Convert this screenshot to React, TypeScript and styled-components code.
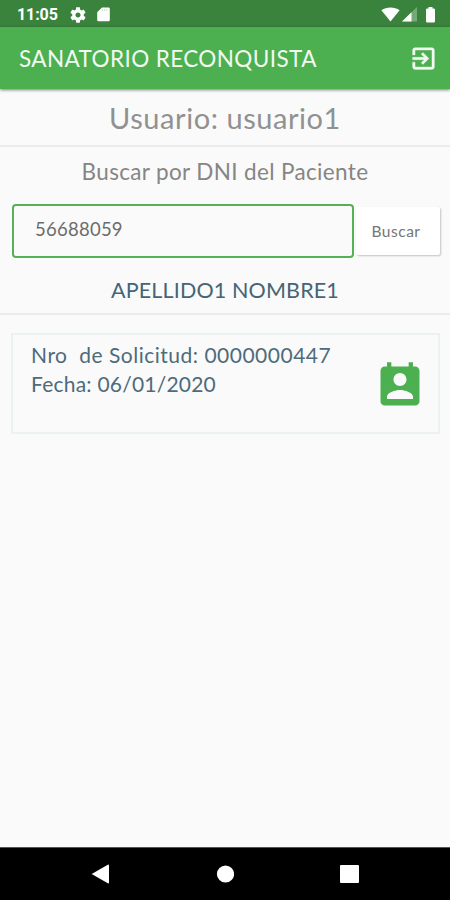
import React from 'react';
import styled, { createGlobalStyle } from 'styled-components';

const GlobalStyle = createGlobalStyle`
  * { box-sizing: border-box; }
  body { margin: 0; background: #fafafa; }
`;

const Screen = styled.div`
  width: 450px;
  height: 900px;
  display: flex;
  flex-direction: column;
  overflow: hidden;
  background: #fafafa;
  font-family: Lato, 'Open Sans', sans-serif;
`;

const StatusBar = styled.header`
  height: 27px;
  flex: none;
  display: flex;
  align-items: center;
  justify-content: space-between;
  padding: 2px 14px 0 17px;
  background: #3a833d;
  color: #fff;
`;

const StatusGroup = styled.div<{ $gap: number }>`
  display: flex;
  align-items: center;
  gap: ${(p) => p.$gap}px;
`;

const Clock = styled.span`
  font: 700 16px/20px Roboto, sans-serif;
  letter-spacing: -0.1px;
`;

const AppBar = styled.div`
  height: 62px;
  flex: none;
  display: flex;
  align-items: center;
  justify-content: space-between;
  padding: 0 12px 0 19px;
  background: #4caf50;
  color: #f1faf1;
  box-shadow: 0 1px 3px rgba(0, 0, 0, 0.5);
  position: relative;
`;

const Label = styled.span<{ $size: number; $spacing: number }>`
  font-size: ${(p) => p.$size}px;
  letter-spacing: ${(p) => p.$spacing}px;
  line-height: 29px;
  white-space: pre;
`;

const Heading = styled.div<{ $height: number; $color: string; $ruled?: boolean; $pad?: string }>`
  height: ${(p) => p.$height}px;
  flex: none;
  display: flex;
  align-items: center;
  justify-content: center;
  padding: ${(p) => p.$pad ?? '0'};
  color: ${(p) => p.$color};
  border-bottom: ${(p) => (p.$ruled ? '2px solid #ebebeb' : 'none')};
`;

const SearchRow = styled.form`
  display: flex;
  flex: none;
  height: 54px;
  margin: 0 10px 0 12px;
  gap: 2px;
`;

const DniInput = styled.input`
  width: 342px;
  height: 54px;
  padding: 0 21px 4px;
  border: 2px solid #55b059;
  border-radius: 4px;
  outline: none;
  background: #fafafa;
  color: #6c6c6c;
  font: 400 18.5px Lato, sans-serif;
  letter-spacing: 0.25px;
`;

const SearchButton = styled.button`
  width: 84px;
  height: 48px;
  margin-top: 3px;
  padding: 0 4px 0 0;
  border: 0;
  border-radius: 2px;
  background: #fff;
  color: #757575;
  font-family: inherit;
  box-shadow: 1px 1px 2px rgba(0, 0, 0, 0.22);
`;

const RequestCard = styled.article`
  height: 101px;
  flex: none;
  margin: 18px 10px 0 11px;
  padding: 5px 12px 0 18px;
  display: flex;
  justify-content: space-between;
  border: 2px solid #ecf3ec;
  color: #4d6b7a;
`;

const RequestText = styled.div`
  display: flex;
  flex-direction: column;
`;

const CardIcon = styled.svg`
  width: 52px;
  height: 52px;
  margin-top: 20px;
  fill: #4caf50;
`;

const NavBar = styled.nav`
  height: 53px;
  flex: none;
  margin-top: auto;
  display: flex;
  align-items: center;
  justify-content: space-between;
  padding: 0 91px;
  border-top: 1px solid #555;
  background: #000;
`;

export default function App() {
  return (
    <Screen>
      <GlobalStyle />
      <StatusBar>
        <StatusGroup $gap={12}>
          <Clock>11:05</Clock>
          <StatusGroup $gap={11}>
            <svg width="16" height="16" viewBox="2 2 20 20" fill="#fff">
              <path d="M19.14 12.94c.04-.3.06-.61.06-.94 0-.32-.02-.64-.07-.94l2.03-1.58c.18-.14.23-.41.12-.61l-1.92-3.32c-.12-.22-.37-.29-.59-.22l-2.39.96c-.5-.38-1.03-.7-1.62-.94l-.36-2.54c-.04-.24-.24-.41-.48-.41h-3.84c-.24 0-.43.17-.47.41l-.36 2.54c-.59.24-1.13.57-1.62.94l-2.39-.96c-.22-.08-.47 0-.59.22L2.74 8.87c-.12.21-.08.47.12.61l2.03 1.58c-.05.3-.09.63-.09.94s.02.64.07.94l-2.03 1.58c-.18.14-.23.41-.12.61l1.92 3.32c.12.22.37.29.59.22l2.39-.96c.5.38 1.03.7 1.62.94l.36 2.54c.05.24.24.41.48.41h3.84c.24 0 .44-.17.47-.41l.36-2.54c.59-.24 1.13-.56 1.62-.94l2.39.96c.22.08.47 0 .59-.22l1.92-3.32c.12-.22.07-.47-.12-.61l-2.01-1.58zM12 15.2c-1.76 0-3.2-1.44-3.2-3.2s1.44-3.2 3.2-3.2 3.2 1.44 3.2 3.2-1.44 3.2-3.2 3.2z" />
            </svg>
            <svg width="13" height="15" viewBox="0 0 13 15" fill="#fff">
              <path d="M5 .5h6.5A1.3 1.3 0 0 1 12.8 1.8V13a1.3 1.3 0 0 1-1.3 1.3H1.5A1.3 1.3 0 0 1 .2 13V5.2z" />
              <path d="M5.300 2.200v1.800M7.600 2.200v1.800M9.900 2.200v1.800" stroke="#c5dcc6" strokeWidth="1" />
            </svg>
          </StatusGroup>
        </StatusGroup>
        <StatusGroup $gap={2}>
          <svg width="19" height="15" viewBox="0 0 19 15" fill="#fff">
            <path d="M9.500 14.500L.4 3.200C5.500-.5 13.500-.5 18.600 3.200z" />
          </svg>
          <svg width="15" height="15" viewBox="0 0 15 15">
            <path d="M0 14.500L15 0v14.500z" fill="#76a978" />
            <path d="M0 14.500L9.500 5.300v9.200z" fill="#fff" />
          </svg>
          <svg width="17" height="16" viewBox="0 0 17 16" fill="#fff">
            <path d="M9.500 0h4v1.500h1.300q1.200 0 1.200 1.200v11.600q0 1.200-1.200 1.200H8.200Q7 15.500 7 14.300V2.700q0-1.200 1.200-1.200h1.300z" />
          </svg>
        </StatusGroup>
      </StatusBar>
      <AppBar>
        <Label $size={22.5} $spacing={0.4}>SANATORIO RECONQUISTA</Label>
        <svg width="29" height="29" viewBox="0 0 24 24" fill="#f1faf1" stroke="#f1faf1" strokeWidth="0.3">
          <path d="M10.09 15.59L11.5 17l5-5-5-5-1.41 1.41L12.67 11H3v2h9.67l-2.58 2.59zM19 3H5c-1.11 0-2 .9-2 2v4h2V5h14v14H5v-4H3v4c0 1.1.89 2 2 2h14c1.1 0 2-.9 2-2V5c0-1.1-.9-2-2-2z" />
        </svg>
      </AppBar>
      <Heading $height={58} $color="#919191" $ruled>
        <Label $size={29} $spacing={0.55}>Usuario: usuario1</Label>
      </Heading>
      <Heading $height={57} $color="#858585" $pad="0 0 9px">
        <Label $size={22.5} $spacing={0.35}>Buscar por DNI del Paciente</Label>
      </Heading>
      <SearchRow>
        <DniInput defaultValue="56688059" aria-label="DNI" />
        <SearchButton type="button">
          <Label $size={15.5} $spacing={0.5}>Buscar</Label>
        </SearchButton>
      </SearchRow>
      <Heading $height={57} $color="#456575" $ruled $pad="9px 0 0">
        <Label $size={21.5} $spacing={0.15}>APELLIDO1 NOMBRE1</Label>
      </Heading>
      <RequestCard>
        <RequestText>
          <Label $size={21} $spacing={0.5}>{'Nro  de Solicitud: 0000000447'}</Label>
          <Label $size={21} $spacing={0.22}>Fecha: 06/01/2020</Label>
        </RequestText>
        <CardIcon viewBox="0 0 24 24">
          <path d="M19 3h-1V1h-2v2H8V1H6v2H5c-1.11 0-2 .9-2 2v14c0 1.1.89 2 2 2h14c1.1 0 2-.9 2-2V5c0-1.1-.9-2-2-2zm-7 3c1.66 0 3 1.34 3 3s-1.34 3-3 3-3-1.34-3-3 1.34-3 3-3zm6 12H6v-1c0-2 4-3.1 6-3.1s6 1.1 6 3.1v1z" />
        </CardIcon>
      </RequestCard>
      <NavBar>
        <svg width="18" height="20" viewBox="0 0 18 20" fill="#fff">
          <path d="M.7 10L16.8.7q1.2-.4 1.200.8v17q0 1.2-1.200.8z" />
        </svg>
        <svg width="18" height="18" viewBox="0 0 18 18" fill="#fff">
          <circle cx="9.5" cy="9" r="8.6" />
        </svg>
        <svg width="19" height="18" viewBox="0 0 19 18" fill="#fff">
          <rect width="19" height="18" rx="1" />
        </svg>
      </NavBar>
    </Screen>
  );
}
